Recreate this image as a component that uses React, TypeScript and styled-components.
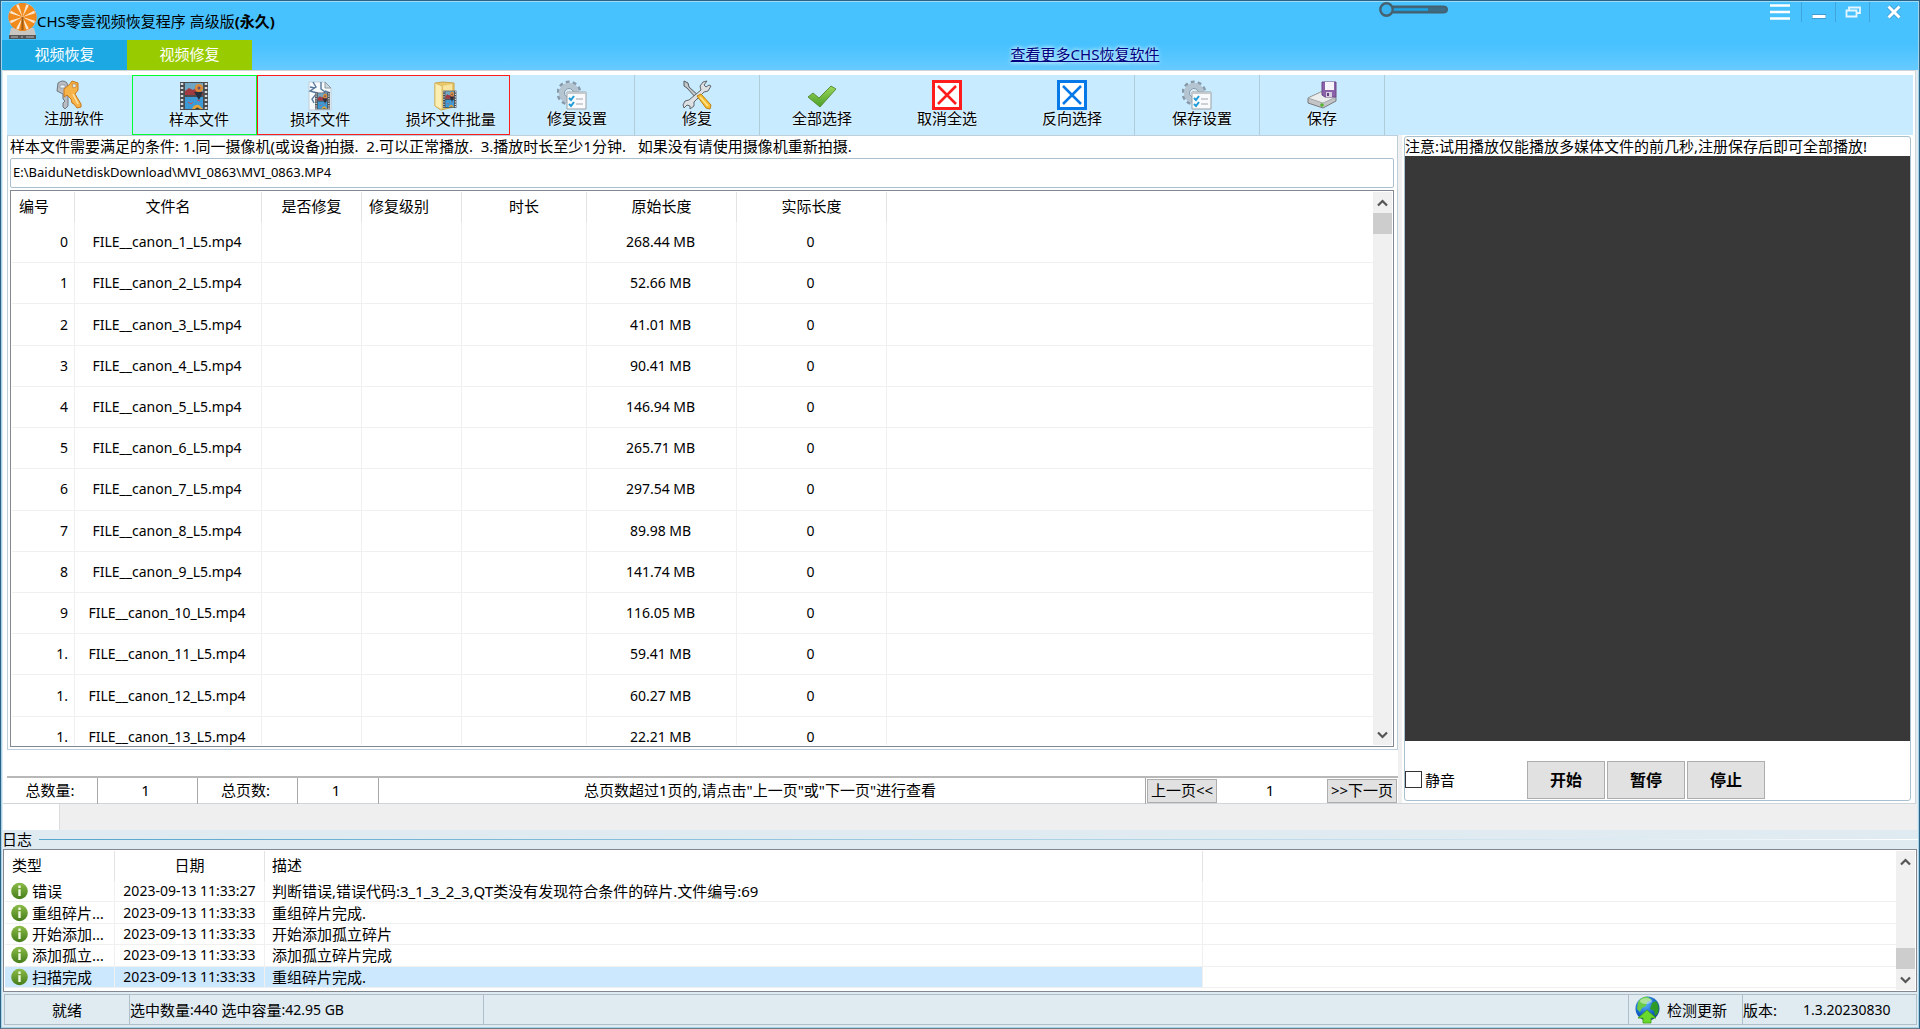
import React from "react";
import styled, { createGlobalStyle, css } from "styled-components";

const font = `"Noto Sans", "Noto Sans CJK SC", sans-serif`;

const GlobalStyle = createGlobalStyle`
  *, *::before, *::after { box-sizing: border-box; }
  html, body { margin: 0; padding: 0; }
  body, button, input, table {
    font-family: ${font};
    font-size: 15px;
    line-height: 20px;
    color: #000;
  }
  button { padding: 0; margin: 0; border: 0; background: none; }
  svg { display: block; flex: none; }
`;

/* ---------- window frame ---------- */

const Window = styled.div`
  height: 100vh;
  min-height: 640px;
  min-width: 1200px;
  display: flex;
  flex-direction: column;
  overflow: hidden;
  background: #dfeaf1;
  border: 1px solid #2c6283;
  border-bottom-color: #6d7b84;
  box-shadow: inset 0 0 0 1px #a5d3ea;
`;

const Header = styled.header`
  flex: none;
  height: 69px;
  margin: 0 1px;
  display: grid;
  grid-template-rows: 38px 30px;
  background: linear-gradient(#47c2ff 0, #47c2ff 42px, #66caff 100%);
  border-top: 1px solid #9bdcfa;
`;

const TitleBar = styled.div`
  display: flex;
  align-items: flex-start;
  padding-left: 6px;
`;

const Title = styled.h1`
  flex: 1;
  margin: 9px 0 0;
  font-size: 15px;
  font-weight: 400;
`;

const OpacitySlider = styled.div`
  margin-right: 308px;
`;

const WindowButton = styled.button<{ $divided?: boolean }>`
  width: 34px;
  height: 20px;
  display: grid;
  place-items: center;
  border-left: 1px solid ${(p) => (p.$divided ? "#3fa5da" : "transparent")};
`;

const WindowButtons = styled.div`
  display: flex;
  padding-right: 1px;
  ${WindowButton}:first-child { width: 44px; }
  ${WindowButton}:last-child { width: 48px; }
`;

const TabRow = styled.div`
  display: grid;
  grid-template-columns: 125px 125px 1fr;
`;

const Tab = styled.button<{ $active?: boolean }>`
  padding-bottom: 2px;
  color: #fff;
  background: ${(p) => (p.$active ? "#99cc00" : "#1ca8e2")};
`;

const MoreLink = styled.a`
  justify-self: center;
  align-self: center;
  padding-bottom: 2px;
  color: #000080;
  text-shadow: 0 0 4px #d8f2ff, 0 0 4px #d8f2ff;
`;

/* ---------- main page ---------- */

const Page = styled.main`
  flex: 1;
  min-height: 0;
  display: flex;
  flex-direction: column;
  margin: 0 3px 0 2px;
  padding: 4px 2px 0 4px;
  background: #fff;
  border: 1px solid #cfd6da;
  border-width: 1px 1px 1px 0;
`;

const Toolbar = styled.div`
  flex: none;
  display: flex;
  height: 60px;
  background: #c8ebff;
`;

const Tool = styled.button<{ $divider?: boolean }>`
  width: 125px;
  display: flex;
  flex-direction: column;
  align-items: center;
  padding-top: 5px;
  border-right: 1px solid ${(p) => (p.$divider ? "#b1ccd9" : "transparent")};
`;

const ToolGroup = styled.div<{ $color: string; $width: number }>`
  display: flex;
  width: ${(p) => p.$width}px;
  border: 1px solid ${(p) => p.$color};
  ${Tool} { flex: 1; }
`;

const ToolLabel = styled.span<{ $inset?: boolean }>`
  line-height: 16px;
  padding-left: ${(p) => (p.$inset ? 10 : 0)}px;
  white-space: nowrap;
  text-shadow: 0 0 3px #fff;
`;

const Columns = styled.div`
  flex: 1;
  min-height: 0;
  display: grid;
  grid-template-columns: minmax(0, 1391fr) minmax(0, 510fr);
  column-gap: 5px;
`;

const LeftColumn = styled.section`
  min-height: 0;
  display: flex;
  flex-direction: column;
  border-right: 4px solid #f0f0f0;
  margin-right: -4px;
`;

const SourceBox = styled.div`
  flex: 1;
  min-height: 0;
  display: flex;
  flex-direction: column;
  padding: 0 3px 2px 2px;
  border: 1px solid #bccfdb;
`;

const Hint = styled.label`
  line-height: 20px;
  padding-bottom: 2px;
  white-space: pre;
`;

const PathInput = styled.input`
  flex: none;
  width: 100%;
  height: 30px;
  margin-bottom: 2px;
  padding: 0 2px 2px;
  font-size: 13px;
  border: 1px solid #abc0cc;
  border-radius: 2px;
  outline: 0;
`;

const ListFrame = styled.div`
  flex: 1;
  min-height: 0;
  display: flex;
  padding: 1px;
  overflow: hidden;
  background: #fff;
  border: 1px solid #828790;
`;

const ListBody = styled.div`
  flex: 1;
  min-width: 0;
  overflow: hidden;
`;

const cell = css`
  font-weight: 400;
  white-space: nowrap;
  overflow: hidden;
  text-overflow: ellipsis;
`;

const Table = styled.table<{ $height: number }>`
  width: 100%;
  height: ${(p) => p.$height}px;
  table-layout: fixed;
  border-collapse: separate;
  border-spacing: 0;
`;

const Th = styled.th<{ $left?: boolean }>`
  ${cell}
  height: 30px;
  padding: 0 7px 2px;
  text-align: ${(p) => (p.$left ? "left" : "center")};
  border-right: 1px solid #e3e3e3;
  &:last-child { border-right: 0; }
`;

const Td = styled.td<{ $align?: string }>`
  ${cell}
  padding: 0 6px 0 4px;
  font-size: 14px;
  text-align: ${(p) => p.$align ?? "center"};
  border-right: 1px solid #f0f0f0;
  border-bottom: 1px solid #f0f0f0;
  &:last-child { border-right: 0; }
`;

const ScrollTrack = styled.div`
  flex: none;
  width: 19px;
  display: flex;
  flex-direction: column;
  background: #f0f0f0;
`;

const ScrollArrow = styled.button`
  height: 21px;
  display: grid;
  place-items: center;
`;

const ScrollSpace = styled.div<{ $end?: boolean }>`
  flex: 1;
  display: flex;
  flex-direction: column;
  justify-content: ${(p) => (p.$end ? "flex-end" : "flex-start")};
`;

const ScrollThumb = styled.div`
  height: 21px;
  background: #cdcdcd;
`;

const Pager = styled.div`
  flex: none;
  height: 27px;
  margin-top: 26px;
  display: grid;
  grid-template-columns: 91px 100px 100px 81px 1fr 72px 108px 72px;
  border-top: 2px solid #b8b8b8;
`;

const PagerCell = styled.div<{ $last?: boolean }>`
  display: grid;
  place-items: center;
  padding: 0 4px 2px 0;
  border-right: ${(p) => (p.$last ? "0" : "1px solid #a8a8a8")};
`;

const PageButton = styled.button`
  margin: 1px;
  padding-bottom: 2px;
  background: #e1e1e1;
  border: 1px solid #adadad;
  white-space: nowrap;
  color: #000;
`;

const Player = styled.section`
  min-height: 0;
  margin: 1px 2px 2px 1px;
  display: flex;
  flex-direction: column;
  border: 1px solid #a9c1cf;
  border-radius: 3px;
`;

const Notice = styled.p`
  margin: 0;
  line-height: 19px;
  white-space: nowrap;
`;

const Screen = styled.div`
  flex: 1;
  background: #383838;
`;

const Controls = styled.div`
  flex: none;
  height: 59px;
  display: flex;
  align-items: center;
  gap: 2px;
  padding-top: 18px;
`;

const Mute = styled.label`
  width: 120px;
  display: flex;
  align-items: center;
  gap: 3px;
`;

const CheckBox = styled.input`
  appearance: none;
  width: 17px;
  height: 17px;
  margin: 0;
  background: #fff;
  border: 1px solid #333;
`;

const PlayerButton = styled.button`
  width: 78px;
  height: 38px;
  font-size: 16px;
  font-weight: 700;
  background: #e1e1e1;
  border: 1px solid #adadad;
`;

/* ---------- log ---------- */

const Strip = styled.div`
  flex: none;
  height: 26px;
  margin: 0 2px;
  background: #efefef;
`;

const BlankTab = styled.div`
  width: 57px;
  height: 100%;
  background: #fff;
  border-right: 1px solid #dcdcdc;
`;

const LogTitle = styled.h2`
  flex: none;
  display: flex;
  align-items: center;
  gap: 7px;
  margin: 0;
  padding: 0 1px;
  font-size: 15px;
  font-weight: 400;
  line-height: 19px;
  &::after {
    content: "";
    flex: 1;
    height: 1px;
    background: linear-gradient(90deg, #55a5cc, #d3e6f0 80%, #fff);
  }
`;

const LogFrame = styled(ListFrame)`
  flex: none;
  height: 143px;
  margin: 0 2px;
`;

const LogRow = styled.tr<{ $selected?: boolean }>`
  ${Td} { font-size: 15px; line-height: 20px; padding: 0 7px; }
  ${Td}:first-child { padding: 0 4px; }
  ${Td}:nth-child(2) { font-size: 14px; }
  ${Td}:not(:last-child) { background: ${(p) => (p.$selected ? "#cce8ff" : "#fff")}; }
`;

const LogType = styled.span`
  display: flex;
  align-items: center;
  gap: 4px;
  padding-left: 2px;
`;

const StatusBar = styled.footer`
  flex: none;
  height: 31px;
  margin: 2px 2px 3px 3px;
  display: grid;
  grid-template-columns: 125px 354px 1fr 114px 173px;
  border: 1px solid #aebfca;
`;

const StatusCell = styled.div<{ $center?: boolean }>`
  display: flex;
  align-items: center;
  justify-content: ${(p) => (p.$center ? "center" : "flex-start")};
  border-right: 1px solid #aebfca;
  white-space: pre;
  &:last-child { border-right: 0; }
`;

const Figure = styled.span`
  font-size: 14px;
`;

const UpdateButton = styled.button`
  display: flex;
  align-items: center;
  gap: 7px;
  padding-left: 6px;
`;

const Version = styled(Figure)`
  margin-left: 26px;
`;

/* ---------- icons ---------- */

const AppLogo = () => (
  <svg width="29" height="38" viewBox="0 0 29 38">
    <path d="M3 26h23l2 8H1z" fill="#c9c6c2" />
    <path d="M1 33h27v4H1z" fill="#555" />
    <path d="M3 35h7m3 0h2m3 0h8" stroke="#bbb" />
    <circle cx="14.500" cy="15" r="14" fill="#fbe7cf" />
    <g fill="#f28a1c">
      {[0, 45, 90, 135, 180, 225, 270, 315].map((a) => (
        <path key={a} d="M14.500 15 L10.500 1.500 A14 14 0 0 1 18.500 1.500z" transform={`rotate(${a} 14.500 15)`} />
      ))}
    </g>
    <circle cx="14.500" cy="15" r="13.500" fill="none" stroke="#d9822a" strokeWidth=".8" />
    <path d="M14.500 15v13" stroke="#a35a13" strokeWidth="2" />
  </svg>
);

const KeysIcon = () => (
  <svg width="30" height="30" viewBox="0 0 30 30">
    <path d="M4 3q5-4 9 0l1 6-3 5 3 0v12l-3 3-2-2v-4l2-2-2-2v-5L3 11z" fill="#b9bec5" stroke="#6f757e" />
    <path d="M6 5h5v3H6z" fill="#edf3f6" stroke="#868c94" strokeWidth=".7" />
    <path d="M10 9l6-5 2-3 6 2 0 7-3 4 6 10 0 3-4 1-3-4-2-1-1-4-4-4-3 2z" fill="#f6b347" stroke="#c8761c" />
    <path d="M18 4l4 0v3l-3 1z" fill="#d8eefb" stroke="#c8761c" strokeWidth=".7" />
    <path d="M19 14l5 10" stroke="#fde2a5" strokeWidth="1.500" />
  </svg>
);

const FilmArt = () => (
  <g>
    <path d="M2 1h28v28H2z" fill="#4a4d50" />
    <path d="M4 2v27M28 2v27" stroke="#d8dcdf" strokeWidth="2.500" strokeDasharray="2 2" />
    <path d="M7 2h18v12H7z" fill="#6fa6c4" />
    <path d="M7 16h18v12H7z" fill="#3c9ad6" />
    <path d="M7 10l4-3 4 2 3-2 7 4v3H7z" fill="#a13b42" />
    <circle cx="21" cy="7" r="4" fill="#d98d38" />
    <circle cx="21" cy="7" r="1.500" fill="#704d6e" />
    <path d="M16 11h9l-4 8z" fill="#25303f" />
    <path d="M10 21l3 2 2-2M19 19l3 1" stroke="#d64d4d" fill="none" />
    <path d="M14 28q2-5 7-4l4 4z" fill="#e5a43d" />
    <path d="M17 28q2-3 5 0z" fill="#343" />
  </g>
);

const FilmIcon = () => (
  <svg width="30" height="30" viewBox="1 0 30 30"><FilmArt /></svg>
);

const BrokenFileIcon = () => (
  <svg width="30" height="30" viewBox="0 0 30 30">
    <path d="M4 1h16l6 6v22H4z" fill="#f7fafc" stroke="#c3ced7" />
    <path d="M20 1v6h6z" fill="#cfd9e0" stroke="#8d9aa5" />
    <path d="M8 1l3 5-6 4 7 2-5 6 2 4M16 1v7l4 3-3 4M5 6l5 1M20 10l5 2" fill="none" stroke="#56789c" strokeWidth="1.400" />
    <g transform="translate(9 11) scale(.53 .6)"><FilmArt /></g>
  </svg>
);

const FolderIcon = () => (
  <svg width="30" height="30" viewBox="0 0 30 30">
    <path d="M4 2l8-1 11 1v24l-13 3-6-4z" fill="#e9c86b" stroke="#c8a44b" />
    <path d="M4 2l7 3v24l-7-4z" fill="#fbeeb3" stroke="#d5b55d" strokeWidth=".8" />
    <path d="M12 5l9-2v8l-9 5z" fill="#f8e5a0" />
    <g transform="translate(11 9) scale(.48 .62)"><FilmArt /></g>
  </svg>
);

const SettingsIcon = () => (
  <svg width="30" height="30" viewBox="0 0 30 30">
    <circle cx="12" cy="13" r="11" fill="none" stroke="#8799a8" strokeWidth="3" strokeDasharray="3.800 3.100" />
    <circle cx="12" cy="13" r="7.500" fill="none" stroke="#b4c4d1" strokeWidth="5.500" />
    <circle cx="12" cy="13" r="4.500" fill="#dcecf6" stroke="#8397a8" />
    <path d="M10 12h19v17H10z" fill="#f8fafb" stroke="#9ba1a6" />
    <path d="M10 12h19v2H10z" fill="#c4c9cd" />
    <path d="M12 18l2 2 3-4M12 24l2 2 3-4" fill="none" stroke="#1d9bd8" strokeWidth="2" />
    <path d="M19 19h7M19 24h7" stroke="#bfc3c6" strokeWidth="1.500" />
  </svg>
);

const ToolsIcon = () => (
  <svg width="30" height="30" viewBox="0 0 30 30">
    <path d="M2 1l4 2 1 4 11 10-3 2L5 8 2 6z" fill="#c3c8cb" stroke="#555b60" />
    <path d="M25 1l-4 1-3 4 1 4L7 20l-4 1-2 4 1 3 3-3 3 1 0 3 4-3v-4L22 12l4-1 3-5-2-1-3 2-2-2z" fill="#dde1e3" stroke="#5e656a" />
    <path d="M15 16l4-2 10 11-1 4-4-1z" fill="#f7bd32" stroke="#bd8115" />
    <path d="M18 17l8 9" stroke="#ffe590" strokeWidth="1.500" />
  </svg>
);

const TickIcon = () => (
  <svg width="30" height="30" viewBox="0 0 30 30">
    <defs>
      <linearGradient id="tick" x1="0" y1="0" x2="0" y2="1">
        <stop offset="0" stopColor="#9bd85c" /><stop offset="1" stopColor="#4a9f27" />
      </linearGradient>
    </defs>
    <path d="M1 17l5-4 6 5L24 6l5 3-16 18z" fill="url(#tick)" stroke="#5b8f37" strokeLinejoin="round" />
  </svg>
);

const CrossBoxIcon = ({ color }: { color: string }) => (
  <svg width="30" height="30" viewBox="0 0 30 30">
    <path d="M1.500 1.500h27v27h-27z" fill="#fff" stroke={color} strokeWidth="3" />
    <path d="M6 6l18 18M24 6L6 24" stroke={color} strokeWidth="2.500" />
  </svg>
);

const SaveIcon = () => (
  <svg width="30" height="30" viewBox="0 0 30 30">
    <path d="M1 18L16 11l13 6v4L16 28 1 23z" fill="#c2c4c6" stroke="#777b7e" />
    <path d="M1 18l15 5 13-6-13-6z" fill="#eceded" stroke="#9b9ea0" strokeWidth=".8" />
    <circle cx="15" cy="25" r="1.800" fill="#55b52c" />
    <path d="M15 2h14v15H18l-3-2z" fill="#8a60a8" stroke="#6b4787" />
    <path d="M18 2h9v8h-9z" fill="#f6f3f9" />
    <path d="M19 12h6v5h-6z" fill="#d8cfe0" />
    <path d="M20 13h2v3h-2z" fill="#62417c" />
  </svg>
);

const InfoIcon = () => (
  <svg width="17" height="18" viewBox="0 0 17 18">
    <defs>
      <linearGradient id="info" x1="0" y1="0" x2="0" y2="1">
        <stop offset="0" stopColor="#8dbd48" /><stop offset="1" stopColor="#447c1a" />
      </linearGradient>
    </defs>
    <circle cx="8.500" cy="9" r="8.300" fill="url(#info)" />
    <path d="M8.500 3.500v2.400M8.500 7.300v6.700" stroke="#eef7df" strokeWidth="2.400" />
  </svg>
);

const GlobeIcon = () => (
  <svg width="25" height="28" viewBox="0 0 25 28">
    <defs>
      <radialGradient id="globe" cx=".4" cy=".3" r=".8">
        <stop offset="0" stopColor="#5db7ff" /><stop offset=".6" stopColor="#1463c8" /><stop offset="1" stopColor="#093277" />
      </radialGradient>
    </defs>
    <circle cx="12.500" cy="12.500" r="12" fill="url(#globe)" />
    <path d="M3 6q4-6 10-5l4 3-5 2-1 4-4 2-2 4-3-3z" fill="#69cb48" />
    <path d="M17 7l4-2q4 5 2 12l-3 3-1-5-4-2z" fill="#2f9b27" />
    <ellipse cx="11" cy="5" rx="6" ry="3" fill="#fff" opacity=".45" />
    <path d="M12 14l9 8h-5v5H8v-5H3z" fill="#6ad92e" stroke="#3b9a12" strokeWidth=".8" />
  </svg>
);

const SliderArt = () => (
  <svg width="70" height="16" viewBox="0 0 70 16">
    <path d="M12 4.500h52q4 0 4 3t-4 3H12z" fill="#3b6d87" stroke="#44616f" strokeWidth="2" />
    <path d="M12 7.500h37" stroke="#1ba4e3" strokeWidth="2.500" />
    <circle cx="7.500" cy="7.500" r="6.200" fill="#38b2ef" stroke="#47606d" strokeWidth="2.400" />
  </svg>
);

const Chevron = ({ down }: { down?: boolean }) => (
  <svg width="11" height="8" viewBox="0 0 11 8">
    <path d={down ? "M1 1.500l4.500 4.500L10 1.500" : "M1 6.500L5.500 2 10 6.500"} fill="none" stroke="#555" strokeWidth="2.200" />
  </svg>
);

const MenuGlyph = () => (
  <svg width="20" height="16" viewBox="0 0 20 16">
    <path d="M0 1.500h20M0 8h20M0 14.500h20" stroke="#fff" strokeWidth="2.500" />
  </svg>
);

const MinGlyph = () => (
  <svg width="16" height="14" viewBox="0 0 16 14">
    <path d="M1 11.500h14" stroke="#3d9bd0" strokeWidth="5" />
    <path d="M1.500 11.500h13" stroke="#fff" strokeWidth="3" />
  </svg>
);

const RestoreGlyph = () => (
  <svg width="16" height="12" viewBox="0 0 16 12">
    <path d="M4 4V1.500h11v5.500h-3M1.500 4.500h10v6h-10z" fill="none" stroke="#e4f5ff" strokeWidth="1.800" />
  </svg>
);

const CloseGlyph = () => (
  <svg width="16" height="14" viewBox="0 0 16 14">
    <path d="M2.500 1.500l11 11M13.500 1.500l-11 11" stroke="#3d9bd0" strokeWidth="4.500" />
    <path d="M2.500 1.500l11 11M13.500 1.500l-11 11" stroke="#fff" strokeWidth="3" />
  </svg>
);

/* ---------- data ---------- */

const sizes = ["268.44", "52.66", "41.01", "90.41", "146.94", "265.71", "297.54", "89.98", "141.74", "116.05", "59.41", "60.27", "22.21"];

const files = sizes.map((size, i) => ({
  no: i < 10 ? String(i) : "1.",
  name: `FILE__canon_${i + 1}_L5.mp4`,
  size: `${size} MB`,
}));

const logs = [
  ["错误", "2023-09-13 11:33:27", "判断错误,错误代码:3_1_3_2_3,QT类没有发现符合条件的碎片.文件编号:69"],
  ["重组碎片…", "2023-09-13 11:33:33", "重组碎片完成."],
  ["开始添加…", "2023-09-13 11:33:33", "开始添加孤立碎片"],
  ["添加孤立…", "2023-09-13 11:33:33", "添加孤立碎片完成"],
  ["扫描完成", "2023-09-13 11:33:33", "重组碎片完成."],
];

const Scrollbar = ({ end }: { end?: boolean }) => (
  <ScrollTrack>
    <ScrollArrow aria-label="向上滚动"><Chevron /></ScrollArrow>
    <ScrollSpace $end={end}><ScrollThumb /></ScrollSpace>
    <ScrollArrow aria-label="向下滚动"><Chevron down /></ScrollArrow>
  </ScrollTrack>
);

interface ToolItemProps {
  icon: React.ReactNode;
  label: string;
  divider?: boolean;
  inset?: boolean;
}

const ToolItem = ({ icon, label, divider, inset }: ToolItemProps) => (
  <Tool $divider={divider}>
    {icon}
    <ToolLabel $inset={inset}>{label}</ToolLabel>
  </Tool>
);

export default function App() {
  return (
    <Window>
      <GlobalStyle />
      <Header>
        <TitleBar>
          <AppLogo />
          <Title>CHS零壹视频恢复程序 高级版<b>(永久)</b></Title>
          <OpacitySlider><SliderArt /></OpacitySlider>
          <WindowButtons>
            <WindowButton aria-label="菜单"><MenuGlyph /></WindowButton>
            <WindowButton $divided aria-label="最小化"><MinGlyph /></WindowButton>
            <WindowButton $divided aria-label="还原"><RestoreGlyph /></WindowButton>
            <WindowButton $divided aria-label="关闭"><CloseGlyph /></WindowButton>
          </WindowButtons>
        </TitleBar>
        <TabRow>
          <Tab>视频恢复</Tab>
          <Tab $active>视频修复</Tab>
          <MoreLink href="#">查看更多CHS恢复软件</MoreLink>
        </TabRow>
      </Header>

      <Page>
        <Toolbar>
          <ToolItem icon={<KeysIcon />} label="注册软件" inset />
          <ToolGroup $color="#00ff30" $width={125}>
            <ToolItem icon={<FilmIcon />} label="样本文件" inset />
          </ToolGroup>
          <ToolGroup $color="#ff1c1c" $width={253}>
            <ToolItem icon={<BrokenFileIcon />} label="损坏文件" />
            <ToolItem icon={<FolderIcon />} label="损坏文件批量" inset />
          </ToolGroup>
          <ToolItem icon={<SettingsIcon />} label="修复设置" divider inset />
          <ToolItem icon={<ToolsIcon />} label="修复" divider />
          <ToolItem icon={<TickIcon />} label="全部选择" />
          <ToolItem icon={<CrossBoxIcon color="#ff1c1c" />} label="取消全选" />
          <ToolItem icon={<CrossBoxIcon color="#0678e8" />} label="反向选择" divider />
          <ToolItem icon={<SettingsIcon />} label="保存设置" divider inset />
          <ToolItem icon={<SaveIcon />} label="保存" divider />
        </Toolbar>

        <Columns>
          <LeftColumn>
            <SourceBox>
              <Hint htmlFor="sample">{"样本文件需要满足的条件: 1.同一摄像机(或设备)拍摄.  2.可以正常播放.  3.播放时长至少1分钟.   如果没有请使用摄像机重新拍摄."}</Hint>
              <PathInput id="sample" defaultValue={"E:\\BaiduNetdiskDownload\\MVI_0863\\MVI_0863.MP4"} />
              <ListFrame>
                <ListBody>
                  <Table $height={566}>
                    <colgroup>
                      <col width="63" /><col width="187" /><col width="100" /><col width="100" />
                      <col width="125" /><col width="150" /><col width="150" /><col />
                    </colgroup>
                    <thead>
                      <tr>
                        <Th $left>编号</Th><Th>文件名</Th><Th>是否修复</Th><Th $left>修复级别</Th>
                        <Th>时长</Th><Th>原始长度</Th><Th>实际长度</Th><Th />
                      </tr>
                    </thead>
                    <tbody>
                      {files.map((f) => (
                        <tr key={f.name}>
                          <Td $align="right">{f.no}</Td><Td>{f.name}</Td><Td /><Td /><Td />
                          <Td>{f.size}</Td><Td>0</Td><Td />
                        </tr>
                      ))}
                    </tbody>
                  </Table>
                </ListBody>
                <Scrollbar />
              </ListFrame>
            </SourceBox>
            <Pager>
              <PagerCell>总数量:</PagerCell>
              <PagerCell>1</PagerCell>
              <PagerCell>总页数:</PagerCell>
              <PagerCell>1</PagerCell>
              <PagerCell>总页数超过1页的,请点击"上一页"或"下一页"进行查看</PagerCell>
              <PageButton>上一页&lt;&lt;</PageButton>
              <PagerCell $last>1</PagerCell>
              <PageButton>&gt;&gt;下一页</PageButton>
            </Pager>
          </LeftColumn>

          <Player>
            <Notice>注意:试用播放仅能播放多媒体文件的前几秒,注册保存后即可全部播放!</Notice>
            <Screen />
            <Controls>
              <Mute><CheckBox type="checkbox" />静音</Mute>
              <PlayerButton>开始</PlayerButton>
              <PlayerButton>暂停</PlayerButton>
              <PlayerButton>停止</PlayerButton>
            </Controls>
          </Player>
        </Columns>
      </Page>

      <Strip><BlankTab /></Strip>
      <LogTitle>日志</LogTitle>
      <LogFrame>
        <ListBody>
          <Table $height={137}>
            <colgroup>
              <col width="110" /><col width="150" /><col width="938" /><col />
            </colgroup>
            <thead>
              <tr><Th $left>类型</Th><Th>日期</Th><Th $left>描述</Th><Th /></tr>
            </thead>
            <tbody>
              {logs.map(([type, date, text], i) => (
                <LogRow key={type} $selected={i === logs.length - 1}>
                  <Td $align="left"><LogType><InfoIcon />{type}</LogType></Td>
                  <Td>{date}</Td>
                  <Td $align="left">{text}</Td>
                  <Td />
                </LogRow>
              ))}
            </tbody>
          </Table>
        </ListBody>
        <Scrollbar end />
      </LogFrame>

      <StatusBar>
        <StatusCell $center>就绪</StatusCell>
        <StatusCell>选中数量<Figure>:440 </Figure>选中容量<Figure>:42.95 GB</Figure></StatusCell>
        <StatusCell />
        <StatusCell><UpdateButton><GlobeIcon />检测更新</UpdateButton></StatusCell>
        <StatusCell>版本:<Version>1.3.20230830</Version></StatusCell>
      </StatusBar>
    </Window>
  );
}
